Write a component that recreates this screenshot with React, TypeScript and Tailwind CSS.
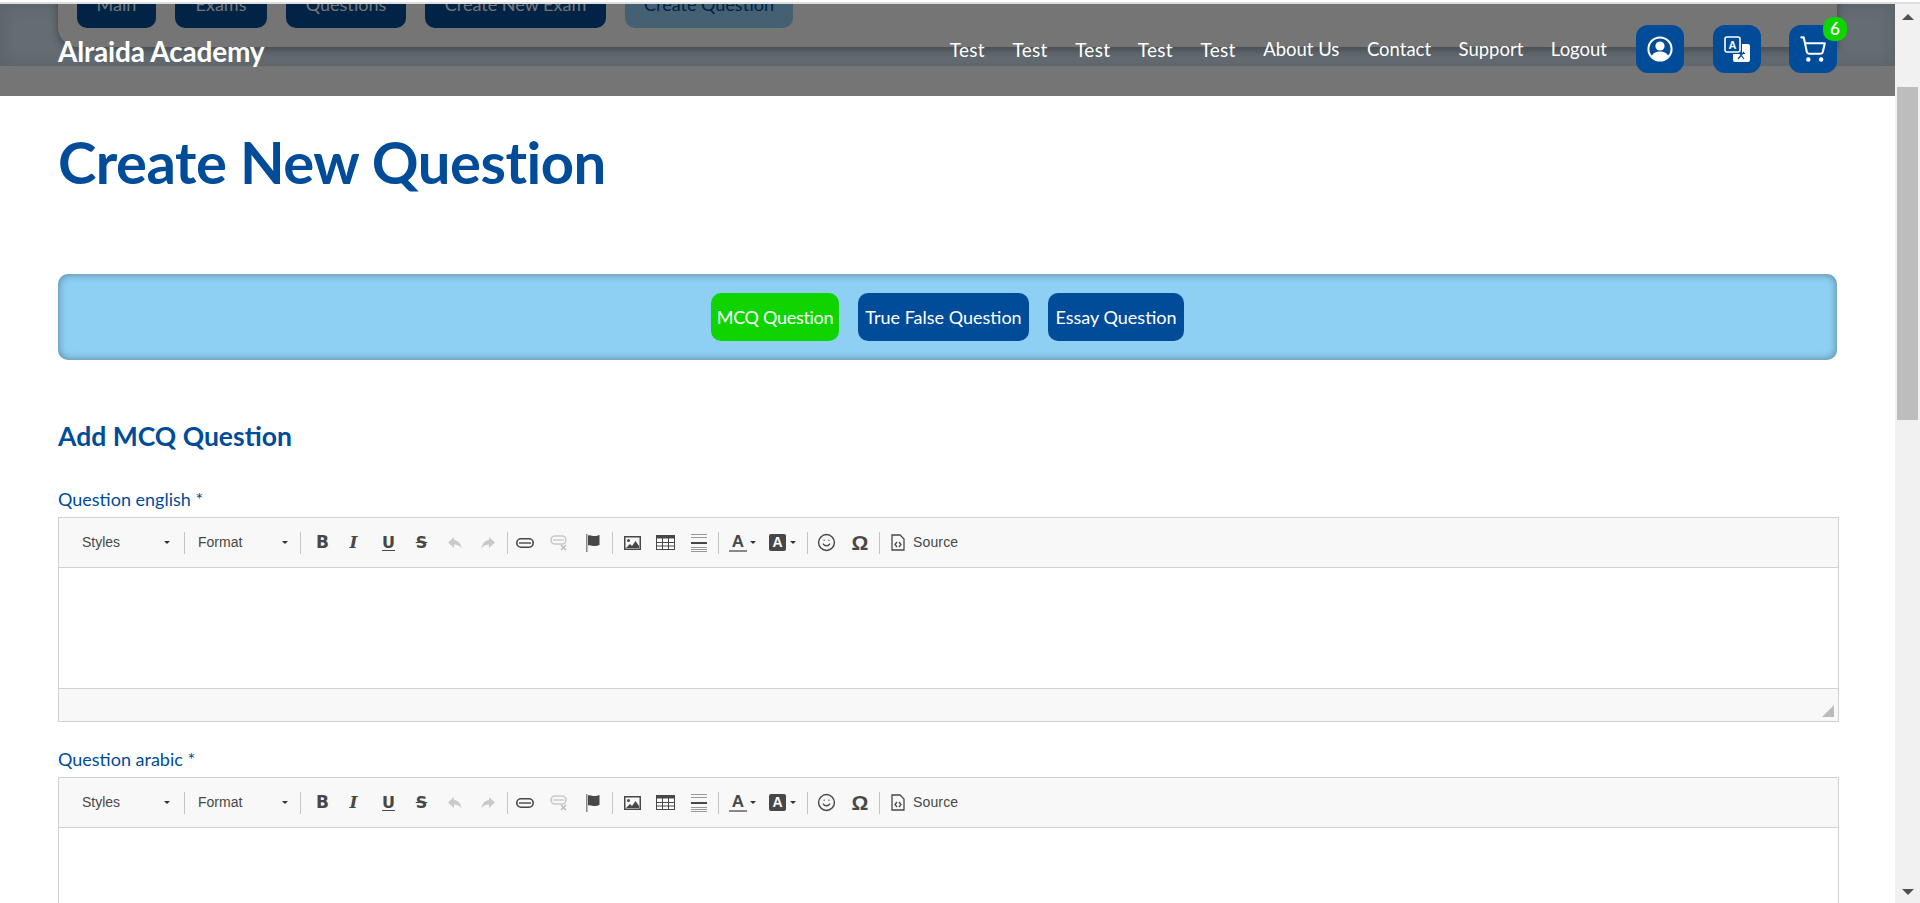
import { ShoppingCart, Smile } from 'lucide-react'

const subNav = [
  { label: 'Main', width: 'w-[79px]', bg: 'bg-[#004c99]' },
  { label: 'Exams', width: 'w-[92px]', bg: 'bg-[#004c99]' },
  { label: 'Questions', width: 'w-[120px]', bg: 'bg-[#004c99]' },
  { label: 'Create New Exam', width: 'w-[181px]', bg: 'bg-[#004c99]' },
  { label: 'Create Question', width: 'w-[168px]', bg: 'bg-[#96d1fa]' },
]

const links = ['Test', 'Test', 'Test', 'Test', 'Test', 'About Us', 'Contact', 'Support', 'Logout']

function UserIcon() {
  return (
    <svg width="26" height="26" viewBox="0 0 26 26" fill="none">
      <circle cx="13" cy="13" r="11.6" stroke="white" strokeWidth="2" />
      <circle cx="13" cy="10" r="4.6" fill="white" />
      <path d="M4.5 20.5c1.5-3.6 4.6-5 8.5-5s7 1.4 8.5 5c-2.2 2.4-5.2 3.7-8.5 3.7s-6.3-1.3-8.500-3.700z" fill="white" />
    </svg>
  )
}

function TranslateIcon() {
  return (
    <svg width="26" height="26" viewBox="0 0 26 26" fill="none">
      <rect x="1" y="1" width="15" height="15" rx="2" stroke="white" strokeWidth="1.6" />
      <text x="8.500" y="12.500" fontSize="11" fontWeight="700" fontFamily="Liberation Sans, sans-serif" textAnchor="middle" fill="white">A</text>
      <path d="M18 8h6a2 2 0 0 1 2 2v14a2 2 0 0 1-2 2H11a2 2 0 0 1-2-2v-6h9z" fill="white" />
      <path d="M14 23l6-7M15 17.500h6M16 18l4 5" stroke="#004c99" strokeWidth="1.200" />
    </svg>
  )
}

function Sep() {
  return <div className="h-[22px] w-px shrink-0 bg-[#c4c4c4]" />
}

function Arrow() {
  return <span className="block h-0 w-0 border-x-[3px] border-t-[3px] border-x-transparent border-t-[#333]" />
}

function Btn({ w, children }: { w: string; children: React.ReactNode }) {
  return <div className={`flex h-full shrink-0 items-center justify-center ${w}`}>{children}</div>
}

function Toolbar() {
  return (
    <div className="flex h-[50px] items-center border-b border-[#d1d1d1] bg-[#f8f8f8] font-['Liberation_Sans',sans-serif] text-[#474747]">
      <div className="flex w-[125px] shrink-0 items-center justify-between pl-[23px] pr-[14px] text-[14px]">
        <span>Styles</span>
        <Arrow />
      </div>
      <Sep />
      <div className="flex w-[115px] shrink-0 items-center justify-between pl-[13px] pr-[12px] text-[14px]">
        <span>Format</span>
        <Arrow />
      </div>
      <Sep />
      <div className="ml-[5px] flex h-full items-center">
        <Btn w="w-[33px]"><span className="font-['DejaVu_Sans',sans-serif] text-[17px] font-bold leading-none">B</span></Btn>
        <Btn w="w-[33px]"><span className="mr-[4px] font-['DejaVu_Serif',serif] text-[17px] font-bold italic leading-none">I</span></Btn>
        <Btn w="w-[33px]"><span className="font-['DejaVu_Sans',sans-serif] text-[16px] font-bold leading-none underline underline-offset-2">U</span></Btn>
        <Btn w="w-[33px]"><span className="font-['DejaVu_Sans',sans-serif] text-[16px] font-bold leading-none line-through">S</span></Btn>
        <Btn w="w-[33px]">
          <svg width="16" height="14" viewBox="0 0 16 14"><path d="M7 1L1 6.500 7 12V8.500c3.500 0 5.500 1 7.500 4-.5-4.500-3-8-7.500-8.500z" fill="#c9c9c9" /></svg>
        </Btn>
        <Btn w="w-[33px]">
          <svg width="16" height="14" viewBox="0 0 16 14"><path d="M9 1l6 5.500L9 12V8.500c-3.500 0-5.500 1-7.500 4C2 8 4.500 4.500 9 4z" fill="#c9c9c9" /></svg>
        </Btn>
      </div>
      <div className="ml-[3px]"><Sep /></div>
      <div className="flex h-full items-center">
        <Btn w="w-[34px]">
          <svg width="18" height="10" viewBox="0 0 18 10" fill="none"><rect x=".8" y=".8" width="16.400" height="8.400" rx="4.200" stroke="#474747" strokeWidth="1.600" /><path d="M3 5h12" stroke="#474747" strokeWidth="1.400" /></svg>
        </Btn>
        <Btn w="w-[34px]">
          <svg width="18" height="16" viewBox="0 0 18 16" fill="none"><rect x="1" y="1" width="15" height="8" rx="4" stroke="#c9c9c9" strokeWidth="1.600" /><path d="M3 5h11" stroke="#c9c9c9" strokeWidth="1.400" /><path d="M11 10l5 5M16 10l-5 5" stroke="#bbb" strokeWidth="1.500" /></svg>
        </Btn>
        <Btn w="w-[34px]">
          <svg width="16" height="18" viewBox="0 0 16 18"><path d="M1 0h1.500v18H1z" fill="#888" /><path d="M3 1.500c2.500-1 4 .5 6.500.5 2 0 3.500-.5 5-1v10c-1.500.5-3 1-5 1-2.500 0-4-1.500-6.500-.5z" fill="#474747" /></svg>
        </Btn>
      </div>
      <div className="ml-[2px]"><Sep /></div>
      <div className="ml-[3px] flex h-full items-center">
        <Btn w="w-[33px]">
          <svg width="17" height="14" viewBox="0 0 17 14"><path fillRule="evenodd" d="M0 0h17v14H0zM1.500 1.500v11h14v-11z" fill="#474747" /><circle cx="4.500" cy="4.500" r="1.500" fill="#474747" /><path d="M2 12l4-4 2 2 3.500-5 3.500 5v2z" fill="#474747" /></svg>
        </Btn>
        <Btn w="w-[33px]">
          <svg width="19" height="15" viewBox="0 0 19 15" fill="none"><rect x=".5" y=".5" width="18" height="14" fill="#fff" stroke="#474747" /><path d="M0 0h19v3.500H0z" fill="#474747" /><path d="M6.500 3v12M12.500 3v12M0 7.500h19M0 11h19" stroke="#474747" /></svg>
        </Btn>
        <Btn w="w-[33px]">
          <svg width="16" height="18" viewBox="0 0 16 18"><path d="M0 0h16v1H0zM0 3h16v1H0zM0 13h16v1H0zM0 15h16v1H0zM0 17h16v1H0z" fill="#999" /><path d="M0 8h16v2H0z" fill="#474747" /></svg>
        </Btn>
      </div>
      <div className="ml-[3px]"><Sep /></div>
      <div className="flex h-full w-[44px] shrink-0 items-center gap-[3px] pl-[10px]">
        <div className="flex w-[18px] flex-col items-center">
          <span className="text-[17px] font-bold leading-[16px]">A</span>
          <span className="h-[2px] w-[18px] bg-[#888]" />
        </div>
        <Arrow />
      </div>
      <div className="flex h-full w-[44px] shrink-0 items-center gap-[4px] pl-[6px]">
        <span className="flex h-[17px] w-[17px] items-center justify-center rounded-[2px] bg-[#474747] text-[14px] font-bold text-white">A</span>
        <Arrow />
      </div>
      <Sep />
      <div className="ml-px flex h-full items-center">
        <Btn w="w-[34px]"><Smile size={19} color="#474747" strokeWidth={1.800} /></Btn>
        <Btn w="w-[34px]"><span className="text-[21px] font-bold leading-none">Ω</span></Btn>
      </div>
      <div className="ml-[2px]"><Sep /></div>
      <div className="flex items-center gap-2 pl-[11px] text-[14px] tracking-[0.15px]">
        <svg width="14" height="17" viewBox="0 0 14 17" fill="none"><path d="M1 1h8l4 4v11H1z" stroke="#474747" strokeWidth="1.300" /><path d="M6 8l-2 2.500L6 13M8 8l2 2.500L8 13" stroke="#474747" strokeWidth="1.300" /></svg>
        <span>Source</span>
      </div>
    </div>
  )
}

function Editor() {
  return (
    <div className="-mr-[2px] border border-[#d1d1d1] bg-white">
      <Toolbar />
      <div className="h-[120px]" />
      <div className="relative h-[33px] border-t border-[#d1d1d1] bg-[#f8f8f8]">
        <span className="absolute bottom-[4px] right-[4px] h-0 w-0 border-b-[12px] border-l-[12px] border-b-[#bbb] border-l-transparent" />
      </div>
    </div>
  )
}

export default function App() {
  return (
    <div className="flex h-[903px] flex-col overflow-hidden bg-white font-['Lato',sans-serif]">
      <div className="mt-[2px] h-[2px] shrink-0 bg-[#dddddd]" />
      <div className="flex min-h-0 flex-1">
        <main className="relative min-w-0 flex-1 overflow-hidden">
          <section className="h-[62px] overflow-hidden bg-[#dceefb] shadow-[inset_0_0_20px_rgba(0,0,0,0.12)]">
            <div className="mx-[58px] -mt-[24px] flex gap-[19px] rounded-bl-[20px] bg-white pb-[19px] pl-[19px] shadow-[0_3px_10px_rgba(0,0,0,0.35)]">
              {subNav.map((item) => (
                <div
                  key={item.label}
                  className={`flex h-[48px] items-center justify-center rounded-[10px] text-[18px] ${item.width} ${item.bg} ${item.bg === 'bg-[#004c99]' ? 'text-white' : 'text-[#004c99]'}`}
                >
                  {item.label}
                </div>
              ))}
            </div>
          </section>

          <header className="absolute inset-x-0 top-0 flex h-[92px] items-center justify-between bg-black/[0.54] pb-[2px] pl-[58px] pr-[58px]">
            <div className="mt-[3px] text-[28px] font-bold tracking-[-0.2px] text-white">Alraida Academy</div>
            <div className="flex items-center">
              <nav className="mr-[29px] mt-[2px] flex items-center gap-[27.5px] text-white">
                {links.map((link, i) => (
                  <span key={i} className={link === 'Test' ? 'text-[19px] tracking-[0.3px]' : 'text-[18.5px]'}>{link}</span>
                ))}
              </nav>
              <div className="flex h-[48px] w-[48px] items-center justify-center rounded-[12px] bg-[#004c99]"><UserIcon /></div>
              <div className="ml-[29px] flex h-[48px] w-[48px] items-center justify-center rounded-[12px] bg-[#004c99]"><TranslateIcon /></div>
              <div className="relative ml-[28px] flex h-[48px] w-[48px] items-center justify-center rounded-[12px] bg-[#004c99]">
                <ShoppingCart size={28} color="white" strokeWidth={1.800} />
                <span className="absolute -right-[10px] -top-[8px] flex h-[24px] w-[24px] items-center justify-center rounded-[10px] bg-[#0fd400] text-[17px] font-semibold text-white">6</span>
              </div>
            </div>
          </header>

          <div className="px-[58px]">
            <h1 className="mt-[56px] text-[58px] font-bold leading-[80px] tracking-[-0.5px] text-[#004c99]">Create New Question</h1>
            <div className="mt-[72px] flex h-[86px] items-center justify-center gap-[19px] rounded-[10px] bg-[#8ed0f4] shadow-[inset_0_0_8px_rgba(0,0,0,0.4)]">
              <div className="flex h-[48px] w-[128px] items-center justify-center rounded-[10px] bg-[#0fd400] text-[18px] tracking-[-0.3px] text-white">MCQ Question</div>
              <div className="flex h-[48px] w-[171px] items-center justify-center rounded-[10px] bg-[#004c99] text-[18px] text-white">True False Question</div>
              <div className="flex h-[48px] w-[136px] items-center justify-center rounded-[10px] bg-[#004c99] text-[18px] text-white">Essay Question</div>
            </div>
            <h2 className="mt-[56px] text-[26.5px] font-bold leading-[40px] text-[#004c99]">Add MCQ Question</h2>
            <label className="mt-[31px] block text-[18px] leading-[24px] text-[#004c99]">Question english *</label>
            <div className="mt-[6px]"><Editor /></div>
            <label className="mt-[25px] block text-[18px] leading-[24px] text-[#004c99]">Question arabic *</label>
            <div className="mt-[6px]"><Editor /></div>
          </div>
        </main>

        <aside className="relative w-[25px] shrink-0 bg-[#f1f1f1]">
          <span className="absolute left-[7px] top-[10px] h-0 w-0 border-x-[6px] border-b-[6px] border-x-transparent border-b-[#505050]" />
          <div className="absolute left-[2px] top-[83px] h-[333px] w-[21px] bg-[#bdbdbd]" />
          <span className="absolute bottom-[8px] left-[7px] h-0 w-0 border-x-[6px] border-t-[6px] border-x-transparent border-t-[#505050]" />
        </aside>
      </div>
    </div>
  )
}
